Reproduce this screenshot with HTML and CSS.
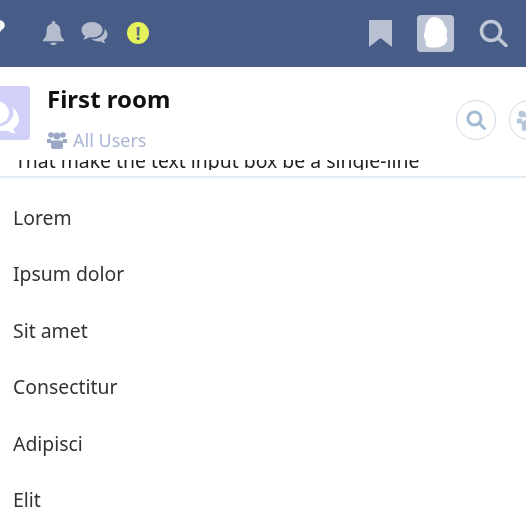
FILE: index.html
```html
<!DOCTYPE html>
<html lang="en">
<head>
  <meta charset="UTF-8">
  <title>First room</title>
  <link rel="stylesheet" href="styles.css">
</head>
<body>
  <div class="navbar">
    <div class="nav-group">
      <svg class="nav-help" viewBox="0 0 20 24"><path d="M10 0C4 0 1 3 1 8h6c0-2 1-3 3-3s3 1 3 2.500c0 3-5 3-5 9h5c0-4 6-4 6-10C19 2.500 15 0 10 0z"/></svg>
      <svg class="nav-bell" viewBox="0 0 24 26"><path d="M12 0c-1.200 0-2 .8-2 2v1C6 4 4.500 7 4.500 11c0 5-1.500 7-4 9.500V22h23v-1.500c-2.500-2.500-4-4.500-4-9.500 0-4-1.500-7-5.500-8V2c0-1.200-.8-2-2-2zM8.500 23.500c0 1.500 1.500 2.500 3.500 2.500s3.500-1 3.500-2.500z"/></svg>
      <svg class="nav-comments" viewBox="0 0 30 24"><path d="M11.500 1C5.500 1 1 4.500 1 9c0 2.500 1.300 4.500 3.500 6-.3 1.500-1 2.500-2 3.500 2.500-.2 4.500-1 6-2.200 1 .2 2 .2 3 .2 6 0 10.500-3.300 10.500-7.500S17.500 1 11.500 1z"/><path d="M24 7.500c.3 1 .2 2 0 3-1 4.500-6 7.500-12 7.500h-1c1.800 1.600 4.300 2.500 7 2.500.7 0 1.400 0 2-.2 1.300 1 3 1.700 5 1.900-.8-.9-1.400-1.800-1.600-3 2.200-1.300 3.600-3.200 3.600-5.400 0-2.600-1.300-4.800-3-6.300z"/></svg>
      <span class="nav-alert">!</span>
    </div>
    <div class="nav-group nav-right">
      <svg class="nav-bookmark" viewBox="0 0 23 27"><path d="M0 0h23v27l-11.500-9L0 27z"/></svg>
      <div class="nav-avatar">
        <svg viewBox="0 0 37 37"><path d="M17 2c3 0 5 1 6.500 2.500 2 .5 3 2.500 3.500 5 1 2 3 3.500 3 6 0 2-.5 3-.5 5s1.500 3 .5 5.500c-.5 2-2 3.500-4 4.500-2 1-4 2-6 2h-6c-2 0-4-.5-5-2-.5-1.500 0-3-.5-5-.5-2-2-3-1.500-6 .5-2 1-3 1-5 0-3 1-6 3-8.500C12 4 14 2 17 2z"/></svg>
      </div>
      <svg class="nav-search" viewBox="0 0 29 28"><circle cx="12" cy="12" r="9.500"/><path d="M19 19l8 7.500"/></svg>
    </div>
  </div>

  <div class="room-header">
    <div class="room-avatar">
      <svg viewBox="0 0 54 54"><path d="M17 14C7 14 1 20 1 27c0 4 2 7 5 9.500-.5 2-1.500 3.500-3 5 4-.3 6.500-1.500 9-3 1.500.3 3 .5 5 .5 9 0 16-5 16-12s-7-13-16-13z" /><path d="M36 21c2 3 2 7 0 11-3 6-10 9-18 9 3 3 7 4 11 4 1 0 2 0 3-.2 2 1.500 4.500 2.700 8 3-1.500-1.500-2.500-3-2.800-5 3.300-2 5.800-5 5.800-9 0-5-3-10-7-12.800z"/></svg>
    </div>
    <div class="room-info">
      <h1 class="room-title">First room</h1>
      <div class="room-scope">
        <svg class="scope-icon" viewBox="0 0 20 18"><circle cx="4" cy="4" r="2.800"/><circle cx="16" cy="4" r="2.800"/><circle cx="10" cy="5" r="3.600"/><path d="M0 8h4.500c-.5 1-.5 3 0 4H0zM15.500 8H20v4h-4.500c.5-1 .5-3 0-4zM6 9.500h8c1.500 0 2 1 2 2.500v4c0 1-1 2-2 2H6c-1 0-2-1-2-2v-4c0-1.500.5-2.500 2-2.500z"/></svg>
        <span>All Users</span>
      </div>
    </div>
    <div class="room-actions">
      <button class="round-button">
        <svg class="action-search" viewBox="0 0 20 20"><circle cx="8.500" cy="8.500" r="6.500"/><path d="M13.500 13.500l5 5"/></svg>
      </button>
      <button class="round-button">
        <svg class="action-users" viewBox="0 0 20 18"><circle cx="4" cy="4" r="2.800"/><circle cx="16" cy="4" r="2.800"/><circle cx="10" cy="5" r="3.600"/><path d="M0 8h4.500c-.5 1-.5 3 0 4H0zM15.500 8H20v4h-4.500c.5-1 .5-3 0-4zM6 9.500h8c1.500 0 2 1 2 2.500v4c0 1-1 2-2 2H6c-1 0-2-1-2-2v-4c0-1.500.5-2.500 2-2.500z"/></svg>
      </button>
    </div>
  </div>

  <div class="message-strip">
    <div class="message-clip">
      <p class="message-text">That make the text input box be a single-line</p>
    </div>
  </div>

  <ul class="word-list">
    <li>Lorem</li>
    <li>Ipsum dolor</li>
    <li>Sit amet</li>
    <li>Consectitur</li>
    <li>Adipisci</li>
    <li>Elit</li>
  </ul>
</body>
</html>
```

FILE: styles.css
```css
html, body {
  height: 100%;
  overflow: hidden;
}
body {
  margin: 0;
  background: #fff;
  font-family: "Noto Sans", "Open Sans", sans-serif;
  color: #333;
  filter: blur(0.6px);
}
.navbar {
  height: 66px;
  padding: 0 18px 1px 0;
  background: #475c86;
  display: flex;
  align-items: center;
  justify-content: space-between;
}
.nav-group {
  display: flex;
  align-items: center;
}
.nav-help {
  width: 16px;
  height: 18px;
  fill: #fff;
  margin-left: -10px;
  margin-right: 36px;
  margin-top: -8px;
}
.nav-bell {
  width: 23px;
  height: 24px;
  fill: #b4bccd;
  margin-right: 15px;
}
.nav-comments {
  width: 31px;
  height: 24px;
  fill: #b4bccd;
  margin-right: 16px;
}
.nav-alert {
  width: 22px;
  height: 22px;
  border-radius: 50%;
  background: #e6f25c;
  color: #5d6a80;
  font-size: 18px;
  font-weight: 700;
  line-height: 22px;
  text-align: center;
}
.nav-right {
  gap: 25px;
}
.nav-bookmark {
  width: 23px;
  height: 27px;
  fill: #b9c1d2;
}
.nav-avatar {
  width: 37px;
  height: 37px;
  border-radius: 4px;
  background: #bcc4d6;
}
.nav-avatar svg {
  display: block;
  fill: #fff;
}
.nav-search {
  width: 29px;
  height: 28px;
  fill: none;
  stroke: #c0c7d6;
  stroke-width: 3.5;
  stroke-linecap: round;
}
.room-header {
  height: 93px;
  display: flex;
  align-items: flex-start;
  margin-left: -24px;
  margin-right: -23px;
}
.room-avatar {
  width: 54px;
  height: 54px;
  border-radius: 4px;
  background: #d0d0f8;
  margin-top: 19px;
  margin-right: 17px;
  flex-shrink: 0;
}
.room-avatar svg {
  display: block;
  fill: #fff;
}
.room-info {
  flex: 1;
  padding-top: 16px;
}
.room-title {
  margin: 0;
  font-size: 24px;
  line-height: 32px;
  font-weight: 700;
  color: #111;
}
.room-scope {
  display: flex;
  align-items: center;
  gap: 6px;
  margin-top: 13px;
  font-size: 18px;
  line-height: 24px;
  color: #a9b5d4;
}
.scope-icon {
  width: 20px;
  height: 18px;
  fill: #9aa8c4;
}
.room-actions {
  display: flex;
  gap: 13px;
  margin-top: 33px;
}
.round-button {
  width: 40px;
  height: 40px;
  padding: 0;
  background: #fff;
  border: 1.5px solid #ccdae6;
  border-radius: 50%;
  display: flex;
  align-items: center;
  justify-content: center;
}
.action-search {
  width: 20px;
  height: 20px;
  fill: none;
  stroke: #a3bad2;
  stroke-width: 3;
  stroke-linecap: round;
}
.action-users {
  width: 24px;
  height: 22px;
  fill: #b5c6d8;
}
.message-strip {
  height: 16px;
  border-bottom: 2px solid #e3ebf3;
  padding-left: 15px;
}
.message-clip {
  height: 10px;
  overflow: hidden;
}
.message-text {
  margin: -11px 0 0;
  font-size: 19.400px;
  line-height: 24px;
  color: #222;
  white-space: nowrap;
}
.word-list {
  list-style: none;
  margin: 0;
  padding: 12px 0 0 13px;
  font-size: 19.400px;
  line-height: 56.400px;
}
```
